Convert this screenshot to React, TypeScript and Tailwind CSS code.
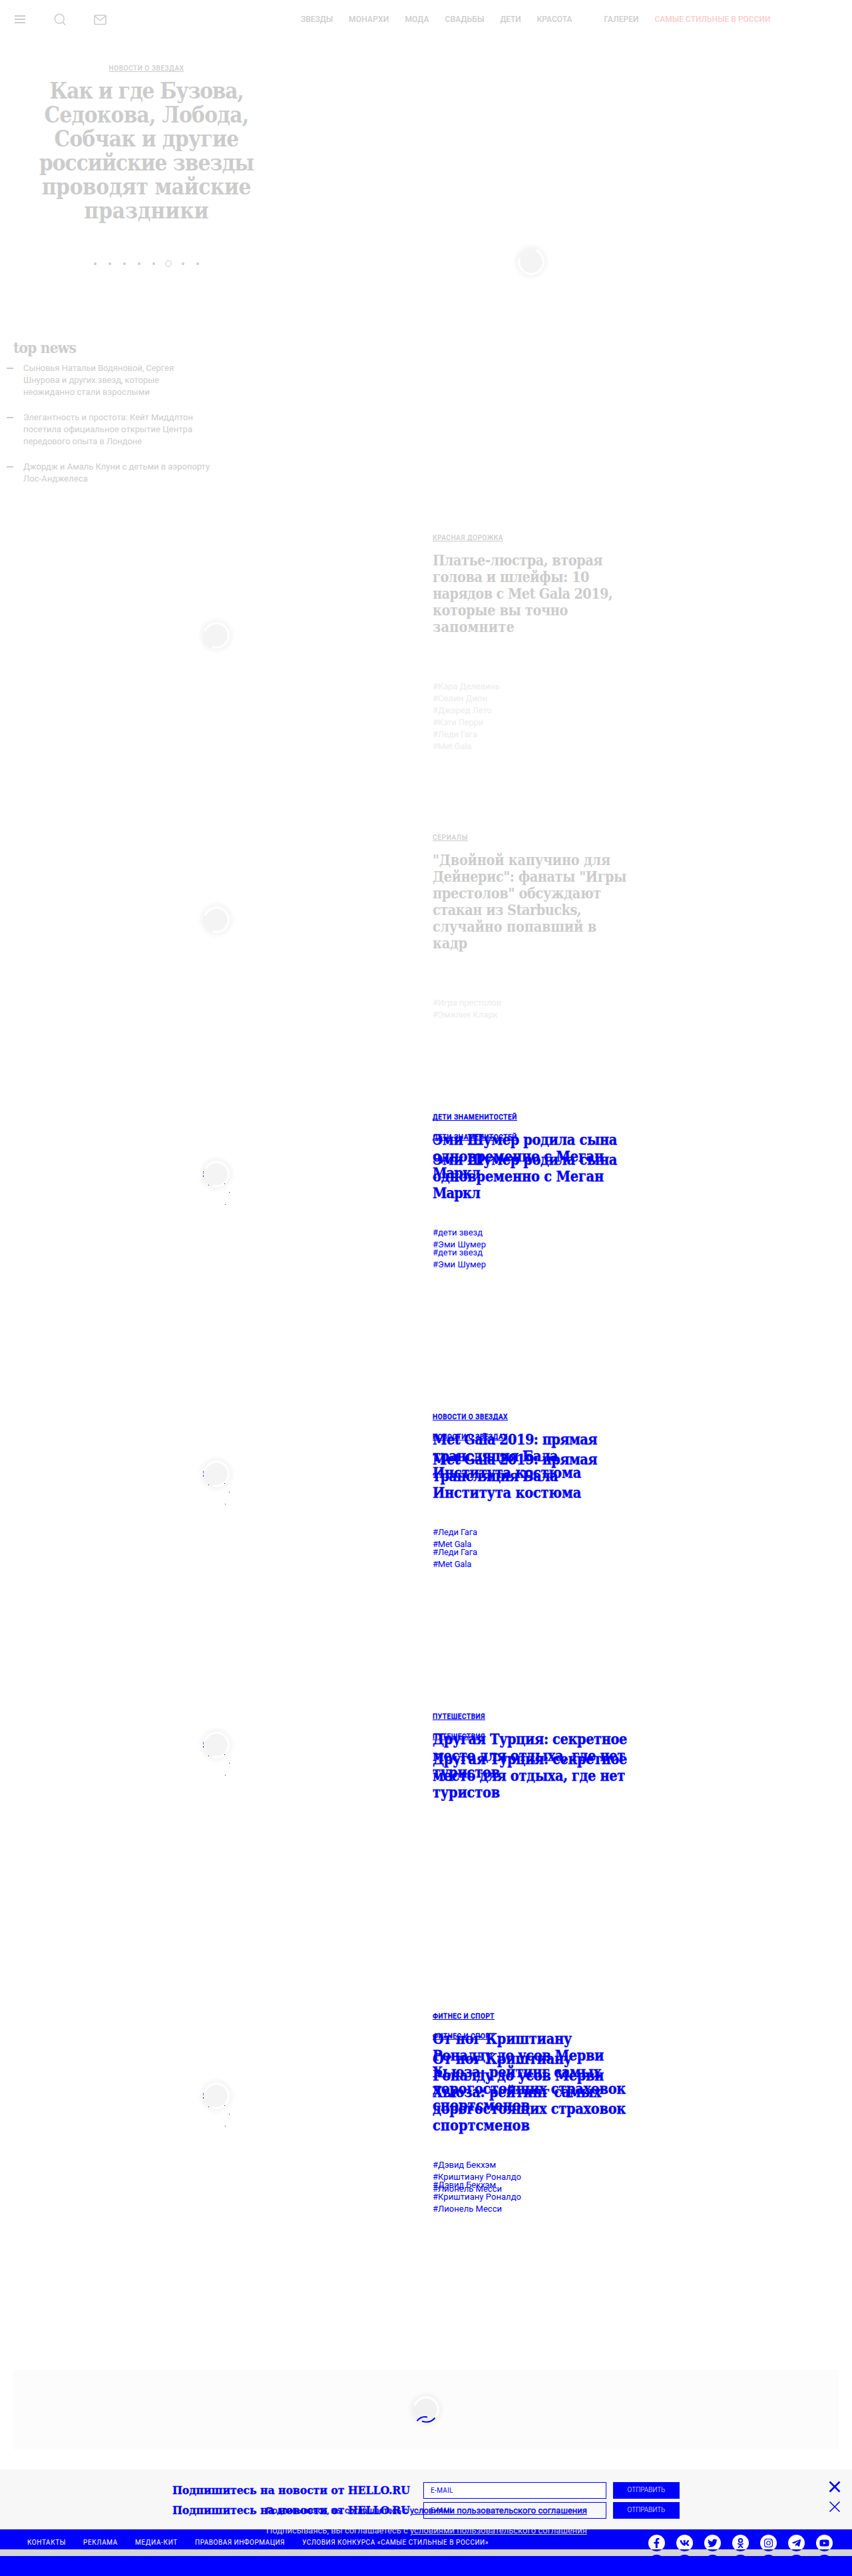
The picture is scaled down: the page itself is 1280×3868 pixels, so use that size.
import React, { useLayoutEffect, useRef, useState } from "react";
import { FaFacebookF, FaVk, FaTwitter, FaOdnoklassniki, FaInstagram, FaTelegramPlane, FaYoutube } from "react-icons/fa";

type Line = [string, number];

/* One line of text, tracked so that it fills the given width. */
function Fit({ text, w, className = "" }: { text: string; w: number; className?: string }) {
  const ref = useRef<HTMLSpanElement>(null);
  const [spacing, setSpacing] = useState(0);
  useLayoutEffect(() => {
    const el = ref.current;
    if (!el) return;
    const prev = el.style.letterSpacing;
    el.style.letterSpacing = "0px";
    const natural = el.getBoundingClientRect().width;
    el.style.letterSpacing = prev;
    setSpacing((w - natural) / text.length);
  }, [text, w]);
  return (
    <span ref={ref} className={"inline-block whitespace-nowrap " + className} style={{ letterSpacing: `${spacing}px` }}>
      {text}
    </span>
  );
}

function Lines({ lines, className }: { lines: Line[]; className: string }) {
  return (
    <div className={className}>
      {lines.map(([t, w]) => (
        <div key={t} className="flex">
          <Fit text={t} w={w} />
        </div>
      ))}
    </div>
  );
}

function Spinner({ variant = "list" }: { variant?: "hero" | "list" | "marked" | "ad" }) {
  const arc =
    variant === "hero" ? "M37 13.1A18.3 18.3 0 1 1 12.9 24" : "M12.9 24A18.3 18.3 0 1 1 24 47.3";
  return (
    <svg width="60" height="60" viewBox="0 0 60 60" className="block overflow-visible">
      <defs>
        <radialGradient id="halo">
          <stop offset="0.66" stopColor="#000" stopOpacity="0.045" />
          <stop offset="1" stopColor="#000" stopOpacity="0" />
        </radialGradient>
      </defs>
      <circle cx="30" cy="30" r="28" fill="url(#halo)" />
      <circle cx="30" cy="30" r="20" fill={variant === "ad" ? "#f1f1f1" : "#f4f4f4"} />
      <path d={arc} fill="none" stroke="#fff" strokeWidth="3.2" />
      {variant === "marked" && (
        <g fill="#00f">
          <rect x="10" y="26" width="1" height="1" />
          <rect x="10" y="28" width="1" height="1" />
          <rect x="10" y="32" width="1" height="2" />
          <rect x="18" y="46" width="1" height="1" />
          <rect x="42" y="44" width="1" height="1" />
          <rect x="49" y="57" width="1" height="1" />
          <rect x="43" y="75" width="1" height="1" />
        </g>
      )}
      {variant === "ad" && (
        <path
          d="M16.5 47Q23 39.5 32 41.5M24 47.5Q36 51.5 43.5 42.5"
          fill="none"
          stroke="#00f"
          strokeWidth="2"
        />
      )}
    </svg>
  );
}

interface Story {
  cat: Line;
  title: Line[];
  tags: Line[];
  spinner: string;
  changed?: boolean;
}

const stories: Story[] = [
  {
    cat: ["КРАСНАЯ ДОРОЖКА", 106],
    title: [["Платье-люстра, вторая", 255], ["голова и шлейфы: 10", 235], ["нарядов с Met Gala 2019,", 270], ["которые вы точно", 203], ["запомните", 123]],
    tags: [["#Кара Делевинь", 101], ["#Селин Дион", 82], ["#Джаред Лето", 89], ["#Кэти Перри", 76], ["#Леди Гага", 67], ["#Met Gala", 58]],
    spinner: "mt-[144px]",
  },
  {
    cat: ["СЕРИАЛЫ", 53],
    title: [["\"Двойной капучино для", 267], ["Дейнерис\": фанаты \"Игры", 291], ["престолов\" обсуждают", 253], ["стакан из Starbucks,", 223], ["случайно попавший в", 246], ["кадр", 52]],
    tags: [["#Игра престолов", 103], ["#Эмилия Кларк", 98]],
    spinner: "mt-[121px]",
  },
  {
    cat: ["ДЕТИ ЗНАМЕНИТОСТЕЙ", 127],
    title: [["Эми Шумер родила сына", 277], ["одновременно с Меган", 257], ["Маркл", 71]],
    tags: [["#дети звезд", 75], ["#Эми Шумер", 80]],
    spinner: "mt-[53px]",
    changed: true,
  },
  {
    cat: ["НОВОСТИ О ЗВЕЗДАХ", 113],
    title: [["Met Gala 2019: прямая", 247], ["трансляция Бала", 188], ["Института костюма", 223]],
    tags: [["#Леди Гага", 67], ["#Met Gala", 58]],
    spinner: "mt-[53px]",
    changed: true,
  },
  {
    cat: ["ПУТЕШЕСТВИЯ", 79],
    title: [["Другая Турция: секретное", 292], ["место для отдыха, где нет", 289], ["туристов", 101]],
    tags: [],
    spinner: "mt-[10px]",
    changed: true,
  },
  {
    cat: ["ФИТНЕС И СПОРТ", 93],
    title: [["От ног Криштиану", 209], ["Роналду до усов Мерви", 257], ["Хьюза: рейтинг самых", 253], ["дорогостоящих страховок", 290], ["спортсменов", 146]],
    tags: [["#Дэвид Бекхэм", 95], ["#Криштиану Роналдо", 133], ["#Лионель Месси", 104]],
    spinner: "mt-[87px]",
    changed: true,
  },
];

function StoryText({ s }: { s: Story }) {
  return (
    <>
      <Lines lines={[s.cat]} className="text-[10px] leading-3 font-medium underline [text-decoration-skip-ink:none]" />
      <Lines lines={s.title} className="mt-[15px] font-['DejaVu_Serif_Condensed','DejaVu_Serif',serif] text-[21.5px] leading-[25px] font-bold" />
      <Lines lines={s.tags} className={"mt-[68px] text-[13px] leading-[18px] " + (s.changed ? "[-webkit-text-stroke:0px]" : "text-[#ebebeb]")} />
    </>
  );
}

function StoryRow({ s }: { s: Story }) {
  return (
    <article className="flex h-[450px]">
      <div className="w-[650px] pl-[295px]">
        <div className={s.spinner}>
          <Spinner variant={s.changed ? "marked" : "list"} />
        </div>
      </div>
      {s.changed ? (
        <div className="relative w-[320px]">
          <div className="pt-[22px] text-[#00f] [-webkit-text-stroke:0.4px]">
            <StoryText s={s} />
          </div>
          <div className="absolute -top-[30px] left-0 pt-[22px] text-[#00f] [-webkit-text-stroke:0.4px]">
            <StoryText s={s} />
          </div>
        </div>
      ) : (
        <div className="w-[320px] pt-[22px] text-[#ccc]">
          <StoryText s={s} />
        </div>
      )}
    </article>
  );
}

const news: Line[][] = [
  [["Сыновья Натальи Водяновой, Сергея", 226], ["Шнурова и других звезд, которые", 204], ["неожиданно стали взрослыми", 190]],
  [["Элегантность и простота: Кейт Миддлтон", 255], ["посетила официальное открытие Центра", 254], ["передового опыта в Лондоне", 178]],
  [["Джордж и Амаль Клуни с детьми в аэропорту", 280], ["Лос-Анджелеса", 97]],
];

function SubscribeForm({ plain = false }: { plain?: boolean }) {
  return (
    <div className="flex h-[25px] pl-[259px] text-[#00f]">
      <div className="w-[377px] font-['DejaVu_Serif_Condensed','DejaVu_Serif',serif] text-[17.5px] leading-[25px] font-bold [-webkit-text-stroke:0.3px]">
        <Fit text="Подпишитесь на новости от HELLO.RU" w={357} />
      </div>
      <div className={"h-[25px] w-[275px] border border-[#00f] pl-[10px] text-[10px] leading-[23px] " + (plain ? "" : "bg-white")}>
        <Fit text="E-MAIL" w={34} />
      </div>
      <div className="ml-[10px] flex h-[25px] w-[100px] justify-center bg-[#00f] text-[10px] leading-[23px] font-light text-white">
        <Fit text="ОТПРАВИТЬ" w={57} />
      </div>
      <svg width="18" height="18" viewBox="0 0 18 18" className="-mt-[2px] ml-[224px]">
        <path d="M1.5 1.5L16.5 16.5M16.5 1.5L1.5 16.5" stroke="#00f" strokeWidth={plain ? 1.5 : 2.6} fill="none" />
      </svg>
    </div>
  );
}

function Consent({ className }: { className: string }) {
  return (
    <div className={"flex text-[13px] leading-[18px] whitespace-pre " + className}>
      <Fit text="Подписываясь, вы соглашаетесь с " w={216} className="whitespace-pre" />
      <Fit text="условиями пользовательского соглашения" w={266} className="underline" />
    </div>
  );
}

const footerLinks: Line[] = [
  ["КОНТАКТЫ", 58], ["РЕКЛАМА", 52], ["МЕДИА-КИТ", 64], ["ПРАВОВАЯ ИНФОРМАЦИЯ", 135], ["УСЛОВИЯ КОНКУРСА «САМЫЕ СТИЛЬНЫЕ В РОССИИ»", 280],
];

const socials = [FaFacebookF, FaVk, FaTwitter, FaOdnoklassniki, FaInstagram, FaTelegramPlane, FaYoutube];

export default function App() {
  return (
    <div className="h-[3868px] w-[1280px] overflow-hidden bg-white font-[Roboto,sans-serif] text-[#ccc]">
      <header className="flex h-[60px] items-start">
        <svg width="16" height="14" viewBox="0 0 16 14" className="mt-[22px] ml-[22px]" stroke="#ccc" strokeWidth="1.8">
          <path d="M0 2h16M0 7h16M0 12h16" />
        </svg>
        <svg width="18" height="18" viewBox="0 0 18 18" className="mt-[20px] ml-[43px]" fill="none" stroke="#ccc" strokeWidth="1.6">
          <circle cx="8.3" cy="8.3" r="7" />
          <path d="M13 13L17 17.5" />
        </svg>
        <svg width="19" height="16" viewBox="0 0 19 16" className="mt-[21.5px] ml-[42px]" fill="none" stroke="#ccc" strokeWidth="1.6">
          <rect x="1" y="1" width="17" height="13.5" rx="1" />
          <path d="M1.5 2L9.5 9L17.5 2" />
        </svg>
        <nav className="mt-[19px] ml-[292px] flex text-[12px] leading-[20px] font-medium">
          <Fit text="ЗВЕЗДЫ" w={48} />
          <Fit text="МОНАРХИ" w={60.5} className="ml-6" />
          <Fit text="МОДА" w={36} className="ml-6" />
          <Fit text="СВАДЬБЫ" w={59} className="ml-6" />
          <Fit text="ДЕТИ" w={31} className="ml-6" />
          <Fit text="КРАСОТА" w={53} className="ml-6" />
          <Fit text="ГАЛЕРЕИ" w={52} className="ml-[48px]" />
          <Fit text="САМЫЕ СТИЛЬНЫЕ В РОССИИ" w={174} className="ml-6 text-[#fcc]" />
        </nav>
      </header>

      <section className="flex h-[447px]">
        <div className="flex w-[440px] flex-col items-center pt-[37px]">
          <Lines lines={[["НОВОСТИ О ЗВЕЗДАХ", 113]]} className="text-[10px] leading-3 font-medium underline [text-decoration-skip-ink:none]" />
          <h1 className="mt-[10px] flex flex-col items-center font-['DejaVu_Serif_Condensed','DejaVu_Serif',serif] text-[33px] leading-[36px] font-bold">
            <Fit text="Как и где Бузова," w={291} />
            <Fit text="Седокова, Лобода," w={307} />
            <Fit text="Собчак и другие" w={277} />
            <Fit text="российские звезды" w={322} />
            <Fit text="проводят майские" w={314} />
            <Fit text="праздники" w={187} />
          </h1>
          <div className="mt-[55px] flex h-3 items-center">
            {[0, 1, 2, 3, 4, 5, 6, 7].map((i) => (
              <div key={i} className="flex w-[22px] justify-center">
                <span className={i === 5 ? "size-[10px] rounded-full border border-[#ccc]" : "size-1 rounded-full bg-[#ccc]"} />
              </div>
            ))}
          </div>
        </div>
        <div className="flex w-[716px] justify-center pt-[303px]">
          <Spinner variant="hero" />
        </div>
      </section>

      <section className="h-[273px]">
        <h2 className="pl-[20px] font-['DejaVu_Serif_Condensed','DejaVu_Serif',serif] text-[22.5px] leading-[30px] font-bold">
          <Fit text="top news" w={94} />
        </h2>
        <div className="mt-[7px] flex flex-col gap-5">
          {news.map((n) => (
            <div key={n[0][0]} className="flex pl-[10px]">
              <span className="mt-2 mr-[15px] h-[2px] w-[10px] bg-[#ccc]" />
              <Lines lines={n} className="text-[13px] leading-[18px]" />
            </div>
          ))}
        </div>
      </section>

      {stories.map((s) => (
        <StoryRow key={s.cat[0]} s={s} />
      ))}

      <div className="mx-5 mt-[78px] flex h-[120px] items-center justify-center bg-[#fcfcfc]">
        <Spinner variant="ad" />
      </div>

      <section className="mt-[30px] h-[90px] bg-[#f7f7f7] pt-[19px]">
        <SubscribeForm />
        <div className="relative">
          <div className="pt-[5px]">
            <SubscribeForm plain />
          </div>
          <Consent className="absolute top-[9px] left-[400px] text-[#00f] [-webkit-text-stroke:0.4px]" />
        </div>
      </section>

      <footer>
        <div className="relative flex h-[30px] bg-[#00f] pl-[41px] text-white">
          <Consent className="absolute -top-[7px] left-[400px] text-[#d6d6d6] [clip-path:inset(7px_0_0_0)]" />
          <div className="mt-[10px] flex gap-[26px] text-[10px] leading-[20px]">
            {footerLinks.map(([t, w]) => (
              <Fit key={t} text={t} w={w} />
            ))}
          </div>
          <div className="absolute top-[8px] left-[974px] flex h-[22px] gap-[17px] overflow-hidden">
            {socials.map((Icon, i) => (
              <span key={i} className="flex size-[25px] items-center justify-center rounded-full bg-white text-[15px] text-[#00f]">
                <Icon />
              </span>
            ))}
          </div>
        </div>
        <div className="relative h-[10px] overflow-hidden bg-[#d6d6d6]">
          <div className="absolute -top-[22px] left-[974px] flex flex-col gap-[5px]">
            {[0, 1].map((row) => (
              <div key={row} className="flex gap-[17px]">
                {socials.map((_, i) => (
                  <span key={i} className="size-[25px] rounded-full bg-[#00f]" />
                ))}
              </div>
            ))}
          </div>
        </div>
        <div className="h-[30px] bg-[#00f]" />
      </footer>
    </div>
  );
}
